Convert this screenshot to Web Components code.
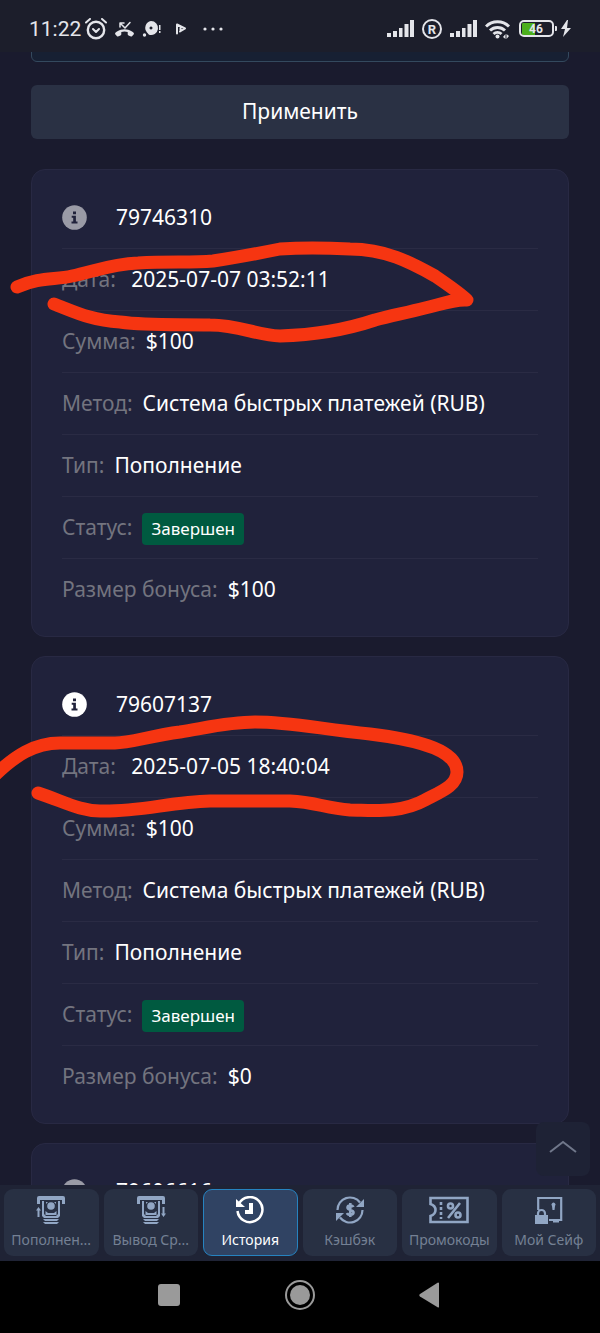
<!DOCTYPE html>
<html lang="ru">
<head>
<meta charset="utf-8">
<meta name="viewport" content="width=device-width, initial-scale=1">
<title>История</title>
<style>
  html, body { margin: 0; background: #000; }
  body { font-family: "Noto Sans", "Open Sans", sans-serif; color: #fff; }
</style>
</head>
<body>
<wallet-app></wallet-app>

<template id="t-app">
  <style>
    :host { display: flex; flex-direction: column; height: 100vh; position: relative; overflow: hidden; background: #1a1b2e; }
    main { flex: 1; min-height: 0; overflow: hidden; padding: 0 31px; display: flex; flex-direction: column; }
    main > * { flex-shrink: 0; }
    .list { display: flex; flex-direction: column; gap: 19px; margin-top: 30px; }
    .footer { position: relative; }
    scroll-top { position: absolute; right: 10px; bottom: 85px; }
  </style>
  <status-bar></status-bar>
  <main>
    <filter-form></filter-form>
    <section class="list">
      <payment-card number="79746310" dim>
        <payment-row label="Дата:">&nbsp;2025-07-07 03:52:11</payment-row>
        <payment-row label="Сумма:">$100</payment-row>
        <payment-row label="Метод:">Система быстрых платежей (RUB)</payment-row>
        <payment-row label="Тип:">Пополнение</payment-row>
        <payment-row label="Статус:"><status-badge>Завершен</status-badge></payment-row>
        <payment-row label="Размер бонуса:">$100</payment-row>
      </payment-card>
      <payment-card number="79607137">
        <payment-row label="Дата:">&nbsp;2025-07-05 18:40:04</payment-row>
        <payment-row label="Сумма:">$100</payment-row>
        <payment-row label="Метод:">Система быстрых платежей (RUB)</payment-row>
        <payment-row label="Тип:">Пополнение</payment-row>
        <payment-row label="Статус:"><status-badge>Завершен</status-badge></payment-row>
        <payment-row label="Размер бонуса:">$0</payment-row>
      </payment-card>
      <payment-card number="79606616" dim></payment-card>
    </section>
  </main>
  <div class="footer">
    <scroll-top></scroll-top>
    <tab-bar></tab-bar>
  </div>
  <system-nav></system-nav>
  <marker-notes></marker-notes>
</template>

<template id="t-status">
  <style>
    :host { display: flex; align-items: center; justify-content: space-between; height: 52px; padding: 5px 29px 0; box-sizing: border-box; background: #1c1e2b; color: #e4e5ea; flex-shrink: 0; }
    .side { display: flex; align-items: center; gap: 8px; }
    time { font: 400 21px/26px Roboto, sans-serif; }
    svg { display: block; fill: currentColor; }
    .left { gap: 7px; }
    .left time { margin-right: -3px; }
    .line { fill: none; stroke: currentColor; stroke-width: 2; stroke-linecap: round; stroke-linejoin: round; }
    text { font-family: Roboto, sans-serif; font-weight: 700; text-anchor: middle; }
    .battery { margin-left: 1px; }
  </style>
  <div class="side left">
    <time>11:22</time>
    <svg width="22" height="22" viewBox="0 0 22 22"><g class="line"><circle cx="11" cy="12" r="8.200" style="stroke-width:2.400"/><path d="M8 11l3 3 3-3"/><path d="M1 4.500l4-3.500M21 4.500l-4-3.500"/></g></svg>
    <svg width="21" height="20" viewBox="0 0 21 20"><path d="M1 15c0-1 1-2 2-2.500 5-3 10-3 15 0 1 .5 2 1.500 2 2.500l-2 2.300c-1 .7-4-.8-4.300-1.800v-2.500a10 10 0 0 0-6.400 0v2.500c-.3 1-3.300 2.500-4.300 1.800z"/><path class="line" d="M6 8V4h4M6.500 4.500l4.500 4.500 5-5.500" style="stroke-width:1.500"/></svg>
    <svg width="20" height="18" viewBox="0 0 20 18"><path fill-rule="evenodd" d="M9 1a7 7 0 1 1-2 13.700L5 12.500A7 7 0 0 1 9 1zm0 5.500a1.500 1.500 0 1 0 .01 0z"/><circle cx="2.500" cy="15" r="1.700"/><path d="M17 5h1.500v5H17zM17 11h1.500v2H17z"/></svg>
    <svg width="24" height="14" viewBox="0 0 24 14"><path class="line" d="M8 2.500v9M8 2.500l8 4-5 3M11.500 6v2.500"/></svg>
    <svg width="28" height="8" viewBox="0 0 28 8"><circle cx="5" cy="4" r="1.600"/><circle cx="13" cy="4" r="1.600"/><circle cx="21" cy="4" r="1.600"/></svg>
  </div>
  <div class="side">
    <svg width="27" height="17" viewBox="0 0 27 17"><path d="M0 13h4v4H0zM6 11h4v6H6zM12 8h3.500v9H12zM17.500 4h4v13h-4zM23 0h4v17h-4z"/></svg>
    <svg width="20" height="20" viewBox="0 0 20 20"><circle class="line" cx="10" cy="10" r="9"/><text x="10" y="15" font-size="13">R</text></svg>
    <svg width="27" height="17" viewBox="0 0 27 17"><path d="M0 13h4v4H0zM6 11h4v6H6zM12 8h3.500v9H12zM17.500 4h4v13h-4zM23 0h4v17h-4z"/></svg>
    <svg width="25" height="20" viewBox="0 0 25 20"><path class="line" style="stroke-width:3;stroke-linecap:butt" d="M1 7.500a16.500 16.500 0 0 1 23 0M5 11.500a11 11 0 0 1 15 0M8.500 15a6 6 0 0 1 8 0"/><circle cx="12.500" cy="17.500" r="2"/><path d="M18 18l2.500-3v5zM24 17l-2.500 3v-5z"/></svg>
    <svg class="battery" width="52" height="18" viewBox="0 0 52 18"><path d="M4 3h12v12H4a1 1 0 0 1-1-1V4a1 1 0 0 1 1-1z" fill="#4caf1d"/><rect class="line" x="1" y="1" width="33" height="15" rx="4"/><path d="M36 6h1a1 1 0 0 1 1 1v3a1 1 0 0 1-1 1h-1z"/><text x="17" y="13" font-size="12">46</text><path d="M48 0l-6 9h4l-2 8 8-9h-4l1-8z"/></svg>
  </div>
</template>

<template id="t-filter">
  <style>
    :host { display: block; margin-top: -44px; }
    form { display: flex; flex-direction: column; gap: 23px; }
    input { height: 54px; box-sizing: border-box; border: 1px solid #34495e; border-radius: 6px; background: #172033; color: #fff; font: inherit; padding: 0 16px; margin: 0; }
    button { height: 54px; border: 0; border-radius: 6px; background: #2a3144; color: #fff; font: 21px/30px "Noto Sans", sans-serif; padding: 0 0 2px; }
  </style>
  <form onsubmit="return false"><input type="text" aria-label="Фильтр"><button type="submit">Применить</button></form>
</template>

<template id="t-card">
  <style>
    :host { display: block; background: #20223b; border: 1px solid #282943; border-radius: 14px; padding: 16px 30px; }
    header { display: flex; align-items: center; gap: 29px; height: 62px; font-size: 21px; line-height: 30px; }
    svg { display: block; }
    :host([dim]) svg { opacity: .55; }
  </style>
  <header>
    <svg width="25" height="25" viewBox="0 0 25 25"><circle cx="12.500" cy="12.500" r="12.300" fill="#fff"/><path fill="#20223b" d="M11 6.500h3v2.700h-3zM9.700 10.800h4.200v5.700h1.600v2H9.500v-2h1.700v-3.700H9.700z"/></svg>
    <span class="num"></span>
  </header>
  <slot></slot>
</template>

<template id="t-row">
  <style>
    :host { display: flex; align-items: center; gap: 10px; height: 62px; box-sizing: border-box; padding-bottom: 2px; border-top: 1px solid #2a2b44; font-size: 21px; line-height: 30px; white-space: nowrap; }
    .label { color: #73747f; }
  </style>
  <span class="label"></span><span class="value"><slot></slot></span>
</template>

<template id="t-badge">
  <style>
    :host { display: block; background: #005a40; border-radius: 4px; font-size: 17px; line-height: 32px; padding: 0 9px; margin-top: 4px; }
  </style>
  <slot></slot>
</template>

<template id="t-top">
  <style>
    :host { display: block; }
    button { display: grid; place-items: center; width: 54px; height: 54px; border: 0; border-radius: 8px; background: #1e2235; color: #70778a; padding: 0 0 4px; }
  </style>
  <button type="button" aria-label="Наверх"><svg width="28" height="14" viewBox="0 0 28 14" fill="none" stroke="currentColor" stroke-width="2"><path d="M1 12L14 2l13 10"/></svg></button>
</template>

<template id="t-tabs">
  <style>
    :host { display: block; background: #1f2335; }
    nav { display: grid; grid-template-columns: repeat(6, minmax(0, 1fr)); gap: 5px; padding: 4px; padding-bottom: 5px; }
  </style>
  <nav>
    <tab-item label="Пополнен..."><svg width="30" height="28" viewBox="0 0 30 28"><path d="M1 8V2a2 2 0 0 1 2-2h24a2 2 0 0 1 2 2v6h-3V4H4v4zM6 5h2v13l2 2h10l2-2V5h2v15l-2 2H8l-2-2zM7 23h16l-2 2H9zM7 26h16l-2 2H9z"/><circle cx="15" cy="10" r="3.800"/><path d="M10 6h2l-2 2zM20 6h-2l2 2zM9.500 15l2.500 2h6l2.500-2v4h-11zM2.500 11l2.500 3.500H3.500V21h-2v-6.500H0z"/></svg></tab-item>
    <tab-item label="Вывод Ср..."><svg width="30" height="28" viewBox="0 0 30 28"><path d="M1 8V2a2 2 0 0 1 2-2h24a2 2 0 0 1 2 2v6h-3V4H4v4zM6 5h2v13l2 2h10l2-2V5h2v15l-2 2H8l-2-2zM7 23h16l-2 2H9zM7 26h16l-2 2H9z"/><circle cx="15" cy="10" r="3.800"/><path d="M10 6h2l-2 2zM20 6h-2l2 2zM9.500 15l2.500 2h6l2.500-2v4h-11zM27.500 21l2.500-3.500h-1.500V11h-2v6.500H25z"/></svg></tab-item>
    <tab-item label="История" active><svg width="30" height="28" viewBox="0 0 30 28"><path fill="none" stroke="currentColor" stroke-width="2.500" d="M4 7.500A12.500 12.500 0 1 1 2.500 15"/><path d="M1 3v8h9zM14 7h4v11h-8v-4h4z"/></svg></tab-item>
    <tab-item label="Кэшбэк"><svg width="28" height="28" viewBox="0 0 28 28"><path fill="none" stroke="currentColor" stroke-width="2.200" d="M1.500 14A12.500 12.500 0 0 1 24 6.500M26.500 14A12.500 12.500 0 0 1 4 21.500"/><path d="M28 3v8h-8zM0 25v-8h8z"/><path fill="none" stroke="currentColor" stroke-width="2.600" d="M17.500 11c-1-2-6-2.300-6 .5 0 3 6 2 6 5s-5.500 3-6.500.5M14.300 7v14"/></svg></tab-item>
    <tab-item label="Промокоды"><svg width="40" height="28" viewBox="0 0 40 28"><g fill="none" stroke="currentColor" stroke-width="2.600"><path d="M1.500 2h37v24h-37v-6c3-1 5-3 5-6s-2-5-5-6z"/><path d="M12 6v17" stroke-dasharray="3 2"/><circle cx="21.500" cy="10" r="2.500"/><circle cx="29" cy="19" r="2.500"/><path d="M31 7L19 22"/></g></svg></tab-item>
    <tab-item label="Мой Сейф"><svg width="28" height="28" viewBox="0 0 28 28"><path fill="none" stroke="currentColor" stroke-width="2.200" d="M3.200 14V2h23v22H14M3 20v-2.500a3.500 3.500 0 0 1 7 0v2.500"/><path d="M0 19h13v9H0zM18 24h6v2.500h-6zM17 10a2 2 0 1 1 3 0l-.5 4h-2z"/></svg></tab-item>
  </nav>
</template>

<template id="t-tab">
  <style>
    :host { display: block; min-width: 0; }
    a { display: flex; flex-direction: column; align-items: center; gap: 6px; height: 67px; box-sizing: border-box; padding: 6px 4px 0; border: 1px solid transparent; border-radius: 9px; background: #283043; color: #748094; text-decoration: none; font-size: 14px; line-height: 20px; white-space: nowrap; }
    :host([active]) a { background: #304363; border-color: #2683c0; color: #fff; }
    ::slotted(svg) { display: block; fill: currentColor; color: #91a6c4; }
    :host([active]) ::slotted(svg) { color: #fff; }
  </style>
  <a href="#"><slot></slot><span></span></a>
</template>

<template id="t-nav">
  <style>
    :host { display: flex; justify-content: center; gap: 98px; height: 72px; padding-bottom: 4px; box-sizing: border-box; background: #000; flex-shrink: 0; }
    button { width: 32px; border: 0; padding: 0; background: none; color: #9a9a9a; display: grid; place-items: center; }
    svg { fill: currentColor; }
  </style>
  <button aria-label="Недавние"><svg width="32" height="32" viewBox="0 0 32 32"><rect x="4" y="5" width="22" height="22" rx="3"/></svg></button>
  <button aria-label="Домой"><svg width="32" height="32" viewBox="0 0 32 32"><circle cx="16" cy="16" r="14" fill="none" stroke="currentColor" stroke-width="2"/><circle cx="16" cy="16" r="10"/></svg></button>
  <button aria-label="Назад"><svg width="32" height="32" viewBox="0 0 32 32"><path d="M25 4v24a1 1 0 0 1-1 .6L6 17.500a1.500 1.500 0 0 1 0-2.500L24 3.400a1 1 0 0 1 1 .6z"/></svg></button>
</template>

<template id="t-marker">
  <style>
    :host { position: absolute; inset: 0; pointer-events: none; overflow: hidden; }
    svg { display: block; width: 100%; fill: none; stroke: #f63511; stroke-width: 13; stroke-linecap: round; stroke-linejoin: round; }
  </style>
  <svg viewBox="0 0 600 1333" aria-hidden="true">
    <path d="M17 287C40 277 55 280 72 276C95 271 112 264 138 263C170 261 190 263 213 261C240 257 260 253 280 249C310 247 330 248 350 249C385 249 410 262 435 276C448 285 460 293 467 300C456 299 445 303 425 308C405 313 390 316 375 320C345 330 315 335 280 336C255 335 240 325 210 325C180 324 150 326 120 322C90 320 75 312 54 304"/>
    <path d="M-8 778C15 755 35 743 60 743L115 743C130 743 150 736 180 732C210 727 230 722 255 722C290 722 320 729 370 734C410 739 457 748 457 772C457 786 440 792 425 800C400 814 370 810 350 810C325 808 315 802 290 801L210 801C170 802 140 812 100 811C80 811 65 802 38 793"/>
  </svg>
</template>

<script>
  const define = (name, id, setup) => customElements.define(name, class extends HTMLElement {
    constructor() {
      super();
      this.attachShadow({ mode: 'open' }).append(document.getElementById(id).content.cloneNode(true));
    }
    connectedCallback() { if (setup) setup(this, this.shadowRoot); }
  });
  define('status-badge', 't-badge');
  define('payment-row', 't-row', (el, root) => { root.querySelector('.label').textContent = el.getAttribute('label'); });
  define('payment-card', 't-card', (el, root) => { root.querySelector('.num').textContent = el.getAttribute('number'); });
  define('filter-form', 't-filter');
  define('status-bar', 't-status');
  define('scroll-top', 't-top');
  define('tab-item', 't-tab', (el, root) => { root.querySelector('span').textContent = el.getAttribute('label'); });
  define('tab-bar', 't-tabs');
  define('system-nav', 't-nav');
  define('marker-notes', 't-marker');
  define('wallet-app', 't-app');
</script>
</body>
</html>
